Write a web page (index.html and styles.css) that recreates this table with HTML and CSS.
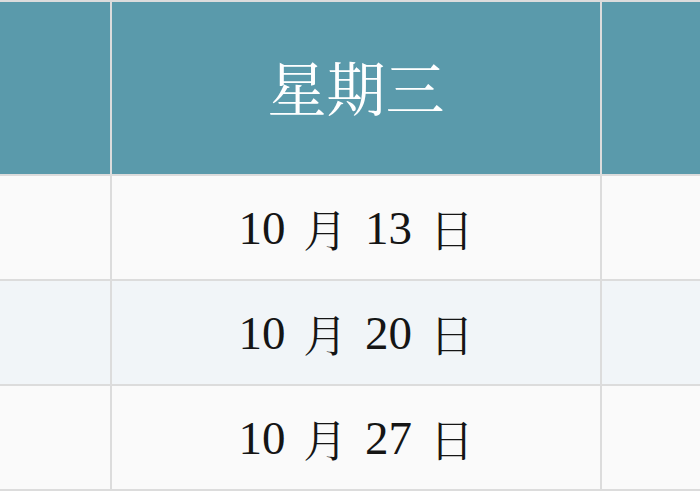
FILE: index.html
```html
<!DOCTYPE html>
<html lang="zh">
<head>
<meta charset="utf-8">
<link rel="stylesheet" href="styles.css">
</head>
<body>
<div class="table">
  <div class="cell head"></div>
  <div class="cell head">星期三</div>
  <div class="cell head"></div>

  <div class="cell odd"></div>
  <div class="cell odd">10 <span class="cjk">月</span> 13 <span class="cjk">日</span></div>
  <div class="cell odd"></div>

  <div class="cell even"></div>
  <div class="cell even">10 <span class="cjk">月</span> 20 <span class="cjk">日</span></div>
  <div class="cell even"></div>

  <div class="cell odd"></div>
  <div class="cell odd">10 <span class="cjk">月</span> 27 <span class="cjk">日</span></div>
  <div class="cell odd"></div>
</div>
</body>
</html>
```
FILE: styles.css
```css
html, body {
  margin: 0;
  padding: 0;
  background: #ffffff;
  overflow: hidden;
}
.table {
  display: grid;
  grid-template-columns: 110px 488px 1fr;
  grid-template-rows: 172px 103px 103px 103px;
  gap: 2px;
  padding: 2px 0;
  background: #dcdcdc;
  font-family: "Liberation Serif", "Noto Serif CJK SC", "Noto Sans CJK SC", serif;
}
.cell {
  display: flex;
  align-items: center;
  justify-content: center;
  color: #151515;
  font-size: 47px;
  word-spacing: 6px;
  white-space: pre;
}
.cjk {
  font-size: 44px;
}
.head {
  background: #5a9aab;
  color: #ffffff;
  font-size: 59px;
  padding-bottom: 6px;
}
.odd {
  background: #fafafa;
}
.even {
  background: #f1f5f8;
}
```
